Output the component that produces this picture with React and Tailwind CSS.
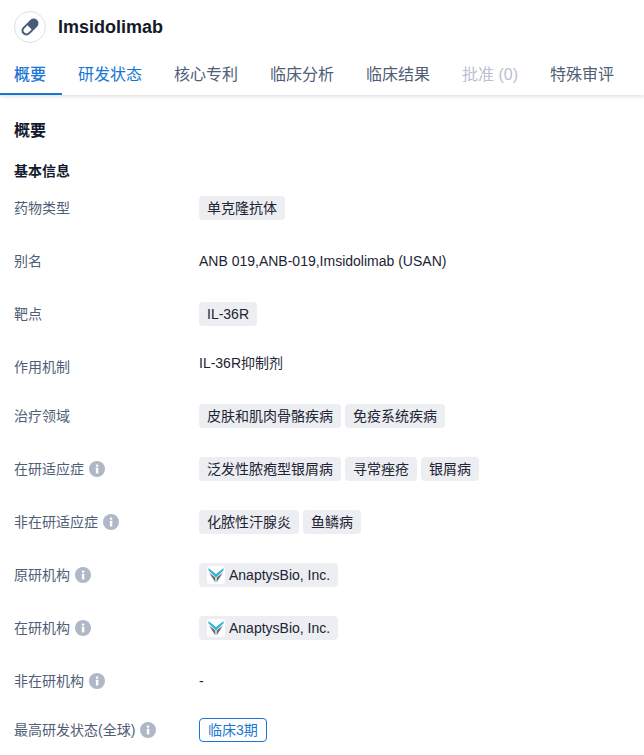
import React from 'react';

const tabs = [
    { label: '概要', cls: 'text-[#1976d2] font-medium border-[#1976d2]', first: true },
    { label: '研发状态', cls: 'text-[#1976d2] border-transparent' },
    { label: '核心专利', cls: 'text-[#4f5d75] border-transparent' },
    { label: '临床分析', cls: 'text-[#4f5d75] border-transparent' },
    { label: '临床结果', cls: 'text-[#4f5d75] border-transparent' },
    { label: '批准 (0)', cls: 'text-[#b9c0cf] border-transparent' },
    { label: '特殊审评', cls: 'text-[#4f5d75] border-transparent' },
];

function Info() {
    return (
        <svg width="16" height="16" viewBox="0 0 16 16" className="shrink-0">
            <circle cx="8" cy="8" r="8" fill="#b0b7c6" />
            <rect x="6.9" y="3.4" width="2.4" height="2.3" rx="0.6" fill="#fff" />
            <rect x="6.9" y="6.8" width="2.4" height="5.6" rx="0.4" fill="#fff" />
        </svg>
    );
}

function Pill() {
    return (
        <svg width="18" height="18" viewBox="0 0 18 18">
            <g transform="rotate(-45 9 9)">
                <rect x="-1" y="4.2" width="20" height="9.6" rx="4.8" fill="#4a5a7a" />
                <path d="M8.4 6.100H4a2.900 2.900 0 0 0 0 5.800H8.400z" fill="#fff" />
            </g>
        </svg>
    );
}

function Logo() {
    return (
        <span className="w-[18px] h-[18px] bg-white rounded-[3px] flex items-center justify-center shrink-0">
            <svg width="16" height="16" viewBox="0 0 16 16">
                <path d="M1 5.500L7.400 10.500V15.500z" fill="#6b6f73" />
                <path d="M15 5.500L8.600 10.500V15.500z" fill="#6b6f73" />
                <path d="M0.500 1L8 7L15.500 1V3.500L8 10.500L0.500 3.500z" fill="#35b4d8" />
            </svg>
        </span>
    );
}

function Tag({ children }) {
    return (
        <span className="h-6 px-2 bg-[#eceef2] rounded-[4px] flex items-center gap-1 text-sm text-[#1d2433] whitespace-nowrap">
            {children}
        </span>
    );
}

function Row({ label, info, children, rowCls = 'min-h-6' }) {
    return (
        <div className={`flex items-start mb-[29px] ${rowCls}`}>
            <div className="w-[185px] h-6 flex items-center gap-[5px] text-sm text-[#4f5d75] shrink-0">
                {label}
                {info && <Info />}
            </div>
            <div className="flex flex-wrap gap-1">{children}</div>
        </div>
    );
}

export default function App() {
    return (
        <div className="w-[644px] h-[755px] overflow-hidden bg-white font-['Liberation_Sans','Noto_Sans_CJK_SC',sans-serif]">
            <div className="shadow-[0_1px_4px_rgba(30,40,70,0.18)]">
                <div className="h-[54px] pl-[14px] pt-[11px] flex items-start gap-3">
                    <div className="w-8 h-8 rounded-full border border-[#dfe1e8] flex items-center justify-center">
                        <Pill />
                    </div>
                    <h1 className="text-lg font-bold text-[#141a2b] leading-8">Imsidolimab</h1>
                </div>
                <div className="flex h-[41px]">
                    {tabs.map(t => (
                        <div
                            key={t.label}
                            className={`h-[41px] pr-4 border-b-2 text-base leading-[41px] whitespace-nowrap ${t.first ? 'pl-[14px]' : 'pl-4'} ${t.cls}`}
                        >
                            {t.label}
                        </div>
                    ))}
                </div>
            </div>

            <div className="px-[14px]">
                <h2 className="text-base font-bold text-[#141a2b] mt-[26px] leading-5">概要</h2>
                <h3 className="text-sm font-bold text-[#141a2b] mt-[20px] mb-[15px] leading-5">基本信息</h3>

                <Row label="药物类型"><Tag>单克隆抗体</Tag></Row>
                <Row label="别名">
                    <span className="text-sm text-[#1d2433] leading-6">ANB 019,ANB-019,Imsidolimab (USAN)</span>
                </Row>
                <Row label="靶点"><Tag>IL-36R</Tag></Row>
                <Row label="作用机制" rowCls="h-5">
                    <span className="text-sm text-[#1d2433] leading-4">IL-36R抑制剂</span>
                </Row>
                <Row label="治疗领域">
                    <Tag>皮肤和肌肉骨骼疾病</Tag>
                    <Tag>免疫系统疾病</Tag>
                </Row>
                <Row label="在研适应症" info>
                    <Tag>泛发性脓疱型银屑病</Tag>
                    <Tag>寻常痤疮</Tag>
                    <Tag>银屑病</Tag>
                </Row>
                <Row label="非在研适应症" info>
                    <Tag>化脓性汗腺炎</Tag>
                    <Tag>鱼鳞病</Tag>
                </Row>
                <Row label="原研机构" info>
                    <Tag><Logo />AnaptysBio, Inc.</Tag>
                </Row>
                <Row label="在研机构" info>
                    <Tag><Logo />AnaptysBio, Inc.</Tag>
                </Row>
                <Row label="非在研机构" info rowCls="h-5">
                    <span className="text-sm text-[#1d2433] leading-6">-</span>
                </Row>
                <Row label="最高研发状态(全球)" info>
                    <span className="h-6 px-2 border border-[#1976d2] rounded-[4px] flex items-center text-sm text-[#1976d2] whitespace-nowrap">临床3期</span>
                </Row>
            </div>
        </div>
    );
}
